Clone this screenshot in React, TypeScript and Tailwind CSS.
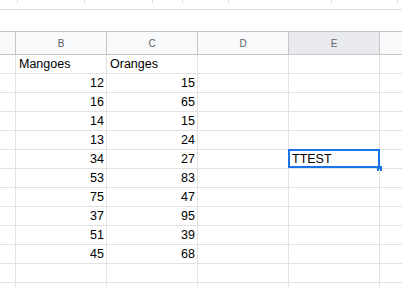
import React from "react";

const data: [string, string][] = [
  ["12", "15"],
  ["16", "65"],
  ["14", "15"],
  ["13", "24"],
  ["34", "27"],
  ["53", "83"],
  ["75", "47"],
  ["37", "95"],
  ["51", "39"],
  ["45", "68"],
];

const cols = "grid grid-cols-[16px_91px_91px_91px_91px_1fr]";

function Row({ b, c, e, right, sel }: { b?: string; c?: string; e?: string; right?: boolean; sel?: boolean }) {
  const cell = "h-[19px] border-b border-r border-[#e2e2e2] flex items-center text-[12.5px] text-black leading-none";
  return (
    <div className={cols}>
      <div className={cell}></div>
      <div className={`${cell} ${right ? "justify-end pr-[2px]" : "pl-[3px]"}`}>{b}</div>
      <div className={`${cell} ${right ? "justify-end pr-[2px]" : "pl-[3px]"}`}>{c}</div>
      <div className={cell}></div>
      <div className={`${cell} pl-[3px] relative`}>
        {e}
        {sel && (
          <>
            <div className="absolute -left-px -top-px -right-px bottom-0 border-2 border-[#1a73e8]"></div>
            <div className="absolute left-[88px] top-[16px] w-[5px] h-[5px] bg-[#1a73e8]"></div>
          </>
        )}
      </div>
      <div className="h-[19px] border-b border-[#e2e2e2]"></div>
    </div>
  );
}

export default function App() {
  const ticks = [17, 84, 152, 182, 228, 331, 397];
  const hcell = "h-[22px] border-r border-[#c4c7c5] flex items-center justify-center text-[10px] text-[#5f6368]";
  return (
    <div className="w-[402px] h-[287px] overflow-hidden bg-white" style={{ fontFamily: '"Liberation Sans", Arial, sans-serif' }}>
      <div className="relative h-[10px] border-b border-[#e0e0e0]">
        {ticks.map((x) => (
          <div key={x} className="absolute top-0 w-px h-[3px] bg-[#dadce0]" style={{ left: x }}></div>
        ))}
      </div>
      <div className="h-[21px]"></div>
      <div className={`${cols} border-t border-b border-[#c4c7c5] bg-[#f8f9fa]`}>
        <div className={hcell}></div>
        <div className={hcell}>B</div>
        <div className={hcell}>C</div>
        <div className={hcell}>D</div>
        <div className={`${hcell} bg-[#e8eaed] text-[#3c4043]`}>E</div>
        <div className="h-[22px]"></div>
      </div>
      <Row b="Mangoes" c="Oranges" />
      {data.map(([b, c], i) => (
        <Row key={i} b={b} c={c} right e={i === 4 ? "TTEST" : undefined} sel={i === 4} />
      ))}
      <Row />
      <Row />
    </div>
  );
}
